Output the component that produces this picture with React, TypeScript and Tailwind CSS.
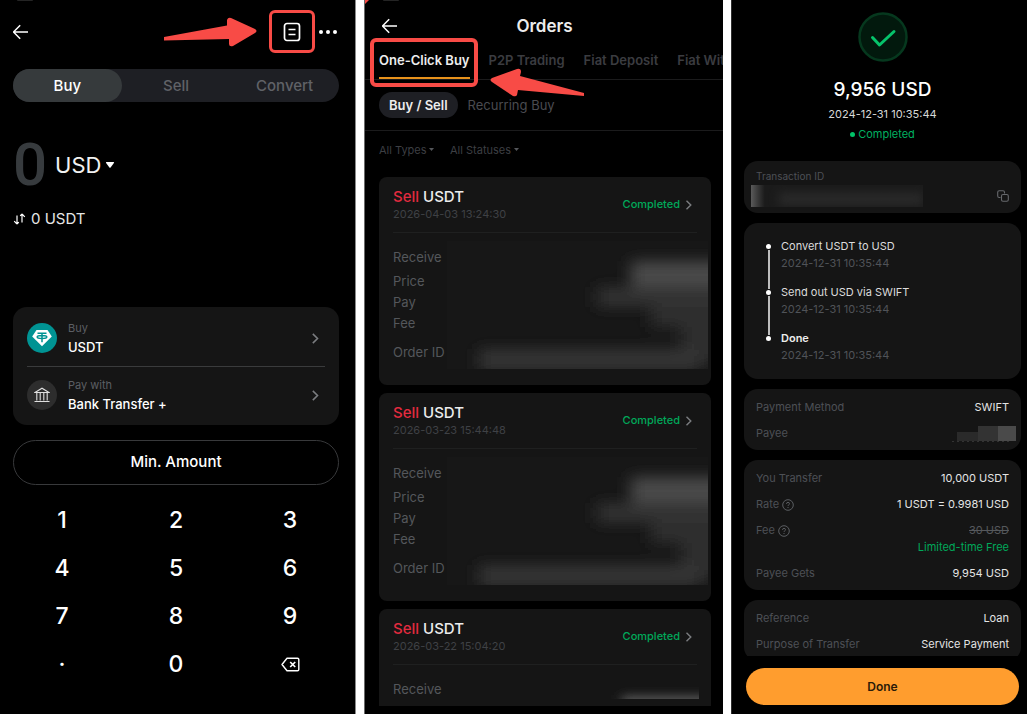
import { useState } from 'react';
import type { ReactNode } from 'react';

interface Order {
  id: number;
  side: string;
  coin: string;
  date: string;
  status: string;
}

const ORDERS: Order[] = [
  { id: 1, side: 'Sell', coin: 'USDT', date: '2026-04-03 13:24:30', status: 'Completed' },
  { id: 2, side: 'Sell', coin: 'USDT', date: '2026-03-23 15:44:48', status: 'Completed' },
  { id: 3, side: 'Sell', coin: 'USDT', date: '2026-03-22 15:04:20', status: 'Completed' },
];

const STEPS = [
  { title: 'Convert USDT to USD', date: '2024-12-31 10:35:44' },
  { title: 'Send out USD via SWIFT', date: '2024-12-31 10:35:44' },
  { title: 'Done', date: '2024-12-31 10:35:44' },
];

const KEYS = ['1', '2', '3', '4', '5', '6', '7', '8', '9', '.', '0', 'del'];

export default function App() {
  return (
    <main className="grid h-screen grid-cols-[356fr_359fr_296fr] gap-2 overflow-hidden bg-white font-['Inter','Liberation_Sans',sans-serif] text-white">
      <BuyScreen />
      <OrdersScreen />
      <ReceiptScreen />
    </main>
  );
}

function BuyScreen() {
  const [tab, setTab] = useState('Buy');
  const [amount, setAmount] = useState('0');

  const press = (key: string) => {
    setAmount(a => {
      if (key === 'del') return a.length > 1 ? a.slice(0, -1) : '0';
      if (key === '.') return a.includes('.') ? a : `${a}.`;
      return a === '0' ? key : a + key;
    });
  };

  return (
    <section className="flex min-w-0 flex-col overflow-hidden border-r border-[#8a8a8a] bg-black pr-4 pl-[13px]">
      <CameraNotch />

      {/* Header */}
      <header className="mt-[9px] flex items-center pr-[2px]">
        <button aria-label="Back">
          <BackIcon />
        </button>
        <svg className="mr-3 ml-auto h-[30px] w-[93px]" viewBox="0 0 93 30" fill="#f84b46">
          <path d="M0 20L63 8.500L63 3Q64 0 67 1L91 12Q94 14 91 16L69 29Q65 30 65 27L65 22L0 23.500Z" />
        </svg>
        <button
          aria-label="Orders"
          className="flex h-[43px] w-[46px] items-center justify-center rounded-md border-3 border-[#f84b46]"
        >
          <svg className="h-5 w-5" viewBox="0 0 20 20" fill="none" stroke="white" strokeWidth={1.7}>
            <rect x="2.500" y="1.500" width="15" height="17" rx="2.500" />
            <path d="M6.500 7.500h7M6.500 12.500h7" strokeWidth={1.4} />
          </svg>
        </button>
        <button aria-label="More" className="ml-1 flex h-5 items-center gap-[3px]">
          <span className="size-1 rounded-full bg-white" />
          <span className="size-1 rounded-full bg-white" />
          <span className="size-1 rounded-full bg-white" />
        </button>
      </header>

      {/* Tabs */}
      <div className="mt-4 grid h-[33px] shrink-0 grid-cols-3 rounded-full bg-[#1e1f24] text-[15px] font-medium">
        {['Buy', 'Sell', 'Convert'].map(name => (
          <button
            key={name}
            onClick={() => setTab(name)}
            className={`rounded-full pt-px ${tab === name ? 'bg-[#363a3c] text-white' : 'text-[#606267]'}`}
          >
            {name}
          </button>
        ))}
      </div>

      {/* Amount */}
      <div className="mt-8 flex h-[62px] shrink-0 items-center">
        <output className="font-['Roboto',sans-serif] text-[60px] leading-[62px] font-medium text-[#373b3e]">
          {amount}
        </output>
        <div className="relative ml-2">
          <select
            aria-label="Currency"
            defaultValue="USD"
            className="appearance-none bg-transparent pr-[13px] text-[22px] leading-8 text-[#f2f2f2] outline-none"
          >
            <option>USD</option>
          </select>
          <svg className="pointer-events-none absolute top-3 right-0 h-2 w-[10px]" viewBox="0 0 10 8" fill="white">
            <path d="M1.500 1h7q1 0 .4 1L5.600 6.500q-.6.700-1.200 0L1.100 2Q.6 1 1.500 1z" />
          </svg>
        </div>
      </div>
      <button className="mt-[13px] flex h-5 shrink-0 items-center gap-[5px] self-start text-[15px] text-[#e6e6e6]">
        <svg className="h-3 w-[13px]" viewBox="0 0 13 12" fill="none" stroke="white" strokeWidth={1.2}>
          <path d="M4 2.500V11M1.200 8.200L4 11M4 11l1.800-1.800M9 9.500V1M11.800 3.800L9 1M9 1L7.200 2.800" />
        </svg>
        0 USDT
      </button>

      {/* Payment */}
      <div className="mt-[78px] shrink-0 rounded-[14px] bg-[#151515] px-[14px] pt-[3px] pb-[2px]">
        <PaymentRow label="Buy" value="USDT">
          <span className="flex size-[30px] items-center justify-center rounded-full bg-[#009393]">
            <svg className="h-[18px] w-5" viewBox="0 0 20 18">
              <path d="M4.500 1h11l4.300 6.500L10 17.300.2 7.500z" fill="white" />
              <path
                d="M5.500 4.200h9M10 4.200v9M5.200 7.900c0-2 9.600-2 9.600 0s-9.600 2-9.600 0z"
                fill="none"
                stroke="#009393"
                strokeWidth={1.5}
              />
            </svg>
          </span>
        </PaymentRow>
        <div className="h-px bg-[#3a3b3c]" />
        <PaymentRow label="Pay with" value="Bank Transfer +">
          <span className="flex size-[30px] items-center justify-center rounded-full bg-[#2d2d2d]">
            <svg className="size-4" viewBox="0 0 16 16" fill="none" stroke="#e0e0e0" strokeWidth={1.1}>
              <path d="M1 5.500L8 1.200l7 4.300zM2.800 5.500v8M6.200 5.500v8M9.800 5.500v8M13.200 5.500v8M.5 14.500h15" />
            </svg>
          </span>
        </PaymentRow>
      </div>

      <button className="mt-[15px] h-[45px] shrink-0 rounded-full border border-[#38393b] text-[15px] font-medium">
        Min. Amount
      </button>

      {/* Keypad */}
      <div className="-mx-2 mt-[11px] grid grid-cols-3">
        {KEYS.map(key => (
          <button
            key={key}
            onClick={() => press(key)}
            aria-label={key === 'del' ? 'Delete' : undefined}
            className="flex h-12 items-center justify-center text-[23px] font-medium"
          >
            {key === 'del' && <DeleteIcon />}
            {key === '.' && <span>·</span>}
            {key !== 'del' && key !== '.' && key}
          </button>
        ))}
      </div>
    </section>
  );
}

function PaymentRow({ label, value, children }: { label: string; value: string; children: ReactNode }) {
  return (
    <button className="flex h-14 w-full items-center gap-[11px] text-left">
      {children}
      <span className="flex flex-1 flex-col">
        <span className="text-[11px] leading-[19px] text-[#5c5f64]">{label}</span>
        <span className="text-[13px] leading-[19px] font-medium">{value}</span>
      </span>
      <ChevronIcon className="mr-[6px] h-[11px] w-2 text-[#7b7d80]" />
    </button>
  );
}

function OrdersScreen() {
  const [tab, setTab] = useState('One-Click Buy');
  const [kind, setKind] = useState('Buy / Sell');

  return (
    <section className="relative flex min-w-0 flex-col overflow-hidden border-l border-[#6a6a6a] bg-black">
      <svg className="absolute top-0 left-0 size-1" viewBox="0 0 4 4" fill="#f84b46">
        <path d="M0 0h4L0 4z" />
      </svg>
      <div className="pl-[14px]">
        <CameraNotch />
      </div>

      {/* Header */}
      <header className="mt-[10px] grid h-[30px] shrink-0 grid-cols-[1fr_auto_1fr] items-center pl-[17px]">
        <button aria-label="Back" className="justify-self-start">
          <BackIcon />
        </button>
        <h1 className="pt-[2px] pr-4 text-[17px] font-semibold text-[#ececec]">Orders</h1>
      </header>

      <div className="relative shrink-0">
        <nav className="flex h-[39px] gap-[19px] overflow-hidden border-b border-[#1b1b1c] pl-[14px] text-[13px] font-semibold whitespace-nowrap">
          {['One-Click Buy', 'P2P Trading', 'Fiat Deposit', 'Fiat Withdrawal'].map(name => (
            <button
              key={name}
              onClick={() => setTab(name)}
              className={`border-b-2 pt-[3px] ${
                tab === name ? 'border-[#e8921b] text-[#ededed]' : 'border-transparent text-[#3b3c40]'
              }`}
            >
              {name}
            </button>
          ))}
        </nav>
        <div className="pointer-events-none absolute -top-[3px] left-[5px] h-[49px] w-[108px] rounded-md border-4 border-[#f84b46]" />
        <svg
          className="pointer-events-none absolute top-[27px] left-[125px] z-10 h-[30px] w-[95px]"
          viewBox="0 0 95 30"
          fill="#f84b46"
        >
          <path d="M2 10L27 1Q31 0 31 4L30 8L94 25L94 28L28 22L27 27Q26 29 23 28L2 14Q-1 12 2 10Z" />
        </svg>
      </div>

      {/* Order kind */}
      <div className="flex h-[51px] shrink-0 items-center gap-[10px] border-b border-[#1b1b1c] pl-[14px] text-[13px]">
        {['Buy / Sell', 'Recurring Buy'].map(name => (
          <button
            key={name}
            onClick={() => setKind(name)}
            className={
              kind === name
                ? 'h-[26px] rounded-full bg-[#1e1f24] px-[10px] pt-[2px] font-semibold text-[#ededed]'
                : 'h-[26px] pt-[2px] text-[#4a4b50]'
            }
          >
            {name}
          </button>
        ))}
      </div>

      {/* Filters */}
      <div className="flex h-[46px] shrink-0 items-center gap-4 pb-3 pl-[14px]">
        <Filter label="All Types" />
        <Filter label="All Statuses" />
      </div>

      <div className="mr-3 mb-2 ml-[14px] flex min-h-0 flex-1 flex-col gap-2 overflow-hidden">
        {ORDERS.map(order => (
          <OrderCard key={order.id} order={order} last={order.id === ORDERS.length} />
        ))}
      </div>
    </section>
  );
}

function Filter({ label }: { label: string }) {
  return (
    <div className="relative">
      <select
        aria-label={label}
        className="appearance-none bg-transparent pr-[7px] text-[11px] text-[#3d3f43] outline-none"
      >
        <option>{label}</option>
      </select>
      <svg className="pointer-events-none absolute top-3 right-0 h-[3px] w-[5px]" viewBox="0 0 5 3" fill="#55575b">
        <path d="M0 0h5L2.500 3z" />
      </svg>
    </div>
  );
}

function OrderCard({ order, last }: { order: Order; last: boolean }) {
  return (
    <article className="h-[208px] shrink-0 rounded-lg bg-[#151515] pl-[14px]">
      <div className="mr-[14px] flex h-14 items-center justify-between border-b border-[#1f2020]">
        <div>
          <h2 className="text-[15px] leading-[18px] font-medium text-[#ececec]">
            <span className="text-[#e32b3f]">{order.side}</span> {order.coin}
          </h2>
          <p className="text-[11px] leading-4 text-[#3f4145]">{order.date}</p>
        </div>
        <button className="mr-[5px] flex items-center gap-[5px] text-[11px] font-medium text-[#00a85a]">
          {order.status}
          <ChevronIcon className="h-[10px] w-[7px] text-[#7b7d80]" />
        </button>
      </div>
      <div className="flex items-start">
        <ul className="w-[54px] shrink-0 pt-[14px] text-[13px] leading-[21px] whitespace-nowrap text-[#54575b]">
          <li>Receive</li>
          <li className="mt-[3px]">Price</li>
          <li>Pay</li>
          <li>Fee</li>
          <li className="mt-2">Order ID</li>
        </ul>
        {last ? <MaskedPreview /> : <MaskedValues />}
      </div>
    </article>
  );
}

// Account values stay hidden behind a blur
function MaskedValues() {
  return (
    <svg className="mt-2 mr-[3px] h-32 min-w-0 flex-1" viewBox="0 0 261 128" preserveAspectRatio="none">
      <filter id="mask" filterUnits="userSpaceOnUse" x="-40" y="-40" width="360" height="220">
        <feGaussianBlur stdDeviation="8 7" />
      </filter>
      <rect width="261" height="128" fill="#171717" />
      <g filter="url(#mask)">
        <rect x="204" y="56" width="100" height="30" fill="#2f2f2f" />
        <rect x="234" y="78" width="70" height="44" fill="#2d2d2d" />
        <rect x="32" y="108" width="220" height="22" fill="#343434" />
        <rect x="150" y="46" width="150" height="20" fill="#323232" />
        <rect x="184" y="20" width="120" height="26" fill="#484848" />
      </g>
    </svg>
  );
}

function MaskedPreview() {
  return (
    <svg className="mt-2 mr-[12px] ml-auto h-[26px] w-[97px]" viewBox="0 0 97 26">
      <filter id="preview" x="-50%" y="-100%" width="200%" height="300%">
        <feGaussianBlur stdDeviation="6 4" />
      </filter>
      <rect x="20" y="22" width="95" height="18" fill="#505050" filter="url(#preview)" />
    </svg>
  );
}

function ReceiptScreen() {
  return (
    <section className="flex min-w-0 flex-col overflow-hidden border-l border-[#303030] bg-black pr-[6px] pl-3">
      <div className="flex min-h-0 flex-1 flex-col gap-[10px] overflow-hidden">
        {/* Summary */}
        <div className="flex shrink-0 flex-col items-center pt-3">
          <svg className="size-[50px]" viewBox="0 0 50 50" fill="none">
            <circle cx="25" cy="25" r="23.500" fill="#02190d" stroke="#06381e" strokeWidth={2.5} />
            <path
              d="M14.500 25.500l7 7.500L36 19.500"
              stroke="#06c46b"
              strokeWidth={3}
              strokeLinecap="round"
              strokeLinejoin="round"
            />
          </svg>
          <h2 className="mt-4 text-[19px] leading-6 font-medium">9,956 USD</h2>
          <p className="mt-1 text-[11px] leading-4 text-[#d8d8d8]">2024-12-31 10:35:44</p>
          <p className="mt-1 flex items-center gap-[3px] text-[11px] leading-4 text-[#00b060]">
            <span className="size-[5px] rounded-full bg-[#00c268]" />
            Completed
          </p>
        </div>

        {/* Transaction */}
        <div className="mt-[9px] h-[52px] shrink-0 rounded-[14px] bg-[#151515] pt-[7px] pr-3 pl-[7px]">
          <p className="pl-[5px] text-[10px] leading-4 text-[#4d5055]">Transaction ID</p>
          <div className="mt-px flex items-center justify-between">
            <div className="h-[22px] w-[172px] overflow-hidden bg-linear-to-r from-[#5a5a5a] via-[#1b1b1b] via-8% to-[#1b1b1b]">
              <div className="mt-2 ml-7 h-3 bg-[#2a2a2a] blur-[5px]" />
            </div>
            <button aria-label="Copy transaction ID">
              <svg className="size-3" viewBox="0 0 12 12" fill="none" stroke="#66686c" strokeWidth={1.1}>
                <path d="M3.500 7.500H2.200Q.7 7.500.7 6V2.200Q.7.700 2.200.7H6q1.500 0 1.500 1.500v1.300" />
                <rect x="4.500" y="4.500" width="6.800" height="6.800" rx="1.500" />
              </svg>
            </button>
          </div>
        </div>

        {/* Progress */}
        <ol className="flex shrink-0 flex-col rounded-[14px] bg-[#151515] py-[15px] pl-[22px] text-[11px] leading-[17px]">
          {STEPS.map((step, i) => (
            <li key={step.title} className="flex gap-[10px]">
              <div className="flex w-[5px] flex-col items-center pt-[6px]">
                <span className="size-[5px] shrink-0 rounded-full bg-white" />
                {i < STEPS.length - 1 && <span className="-mb-[5px] mt-px w-[2px] flex-1 bg-[#bdbdbd]" />}
              </div>
              <div className={i < STEPS.length - 1 ? 'pb-3' : ''}>
                <p className={i === STEPS.length - 1 ? 'font-semibold text-[#ececec]' : 'text-[#dcdcdc]'}>
                  {step.title}
                </p>
                <p className="text-[#505358]">{step.date}</p>
              </div>
            </li>
          ))}
        </ol>

        <InfoCard>
          <InfoRow label="Payment Method" value="SWIFT" />
          <InfoRow
            label="Payee"
            value={
              <svg className="-mr-[7px] h-[17px] w-16" viewBox="0 0 64 17">
                <rect x="5" y="7" width="21" height="9" fill="#2a2a2a" />
                <rect x="26" y="1" width="20" height="15" fill="#333333" />
                <rect x="46" y="1" width="18" height="15" fill="#4a4a4a" />
                <path d="M0 16.500h58" stroke="#333333" strokeDasharray="2 3" />
              </svg>
            }
          />
        </InfoCard>

        <InfoCard>
          <InfoRow label="You Transfer" value="10,000 USDT" />
          <InfoRow label="Rate" help value="1 USDT = 0.9981 USD" />
          <InfoRow
            label="Fee"
            help
            value={
              <>
                <s className="text-[#55585c]">30 USD</s>
                <span className="block text-[#00a85a]">Limited-time Free</span>
              </>
            }
          />
          <InfoRow label="Payee Gets" value="9,954 USD" />
        </InfoCard>

        <InfoCard>
          <InfoRow label="Reference" value="Loan" />
          <InfoRow label="Purpose of Transfer" value="Service Payment" />
        </InfoCard>
      </div>

      <button className="mx-[2px] mt-3 mb-[9px] h-[37px] shrink-0 rounded-full bg-[#ff9d2e] text-xs font-semibold text-[#2a1a08]">
        Done
      </button>
    </section>
  );
}

function InfoCard({ children }: { children: ReactNode }) {
  return (
    <dl className="flex shrink-0 flex-col gap-[9px] rounded-[14px] bg-[#151515] px-3 pt-[10px] pb-2 text-[11px] leading-[17px]">
      {children}
    </dl>
  );
}

function InfoRow({ label, value, help }: { label: string; value: ReactNode; help?: boolean }) {
  return (
    <div className="flex items-start justify-between">
      <dt className="flex items-center gap-[3px] text-[#4d5055]">
        {label}
        {help && <HelpIcon />}
      </dt>
      <dd className="text-right text-[#e4e4e4]">{value}</dd>
    </div>
  );
}

function CameraNotch() {
  return <div className="ml-1 h-px w-4 shrink-0 rounded-b-full bg-[#242424]" />;
}

function BackIcon() {
  return (
    <svg className="h-4 w-4" viewBox="0 0 16 16" fill="none" stroke="white" strokeWidth={1.5}>
      <path d="M15 8H.5M7.200 1.200L.5 8l6.700 6.800" />
    </svg>
  );
}

function ChevronIcon({ className }: { className: string }) {
  return (
    <svg className={className} viewBox="0 0 7 10" fill="none" stroke="currentColor" strokeWidth={1.4}>
      <path d="M1.500.8L5.800 5 1.500 9.200" />
    </svg>
  );
}

function DeleteIcon() {
  return (
    <svg className="h-[15px] w-[19px]" viewBox="0 0 19 15" fill="none" stroke="white" strokeWidth={1.4}>
      <path d="M6 1.200h10.500q1.300 0 1.300 1.300v10q0 1.300-1.300 1.300H6L1 7.500z" strokeLinejoin="round" />
      <path d="M9.200 5l5 5M14.200 5l-5 5" strokeWidth={1.7} />
    </svg>
  );
}

function HelpIcon() {
  return (
    <svg className="size-3" viewBox="0 0 12 12" fill="none" stroke="#5b5e62">
      <circle cx="6" cy="6" r="5.300" />
      <path d="M4.500 4.900q0-1.500 1.500-1.500t1.500 1.300q0 .8-.8 1.200T6 7M6 8v1" />
    </svg>
  );
}
